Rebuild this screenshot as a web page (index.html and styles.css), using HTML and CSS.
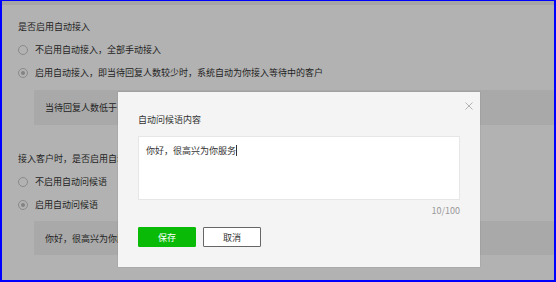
FILE: index.html
```html
<!DOCTYPE html>
<html lang="zh-CN">
<head>
  <meta charset="UTF-8" />
  <title>自动接入设置</title>
  <link rel="stylesheet" href="styles.css">
</head>
<body>

  <div class="frame">

    <div class="page">

      <div class="settings">

        <div class="field-title">是否启用自动接入</div>

        <label class="radio-row">
          <span class="radio"></span>
          <span>不启用自动接入，全部手动接入</span>
        </label>

        <label class="radio-row">
          <span class="radio checked"></span>
          <span>启用自动接入，即当待回复人数较少时，系统自动为你接入等待中的客户</span>
        </label>

        <div class="sub-box">
          <span>当待回复人数低于</span>
          <span class="num-input"></span>
        </div>

        <div class="field-title gap-top">接入客户时，是否启用自动问候语</div>

        <label class="radio-row">
          <span class="radio"></span>
          <span>不启用自动问候语</span>
        </label>

        <label class="radio-row">
          <span class="radio checked"></span>
          <span>启用自动问候语</span>
        </label>

        <div class="sub-box">
          <span>你好，很高兴为你服务</span>
        </div>

      </div>

    </div>

    <div class="mask"></div>

    <!-- 问候语编辑弹窗 -->
    <div class="dialog">
      <span class="close">
        <svg width="8" height="8" viewBox="0 0 8 8">
          <path d="M0.5 0.5 L7.5 7.5 M7.5 0.5 L0.5 7.5" stroke="#b4b4b4" stroke-width="1" fill="none"/>
        </svg>
      </span>
      <div class="dialog-title">自动问候语内容</div>
      <div class="textarea">你好，很高兴为你服务<span class="caret"></span></div>
      <div class="counter">10/100</div>
      <div class="actions">
        <button class="btn btn-primary">保存</button>
        <button class="btn btn-default">取消</button>
      </div>
    </div>

  </div>

</body>
</html>
```

FILE: styles.css
```css
* {
  margin: 0;
  padding: 0;
  box-sizing: border-box;
}

body {
  font-family: "Noto Sans CJK SC", "Noto Sans", sans-serif;
  font-size: 9px;
  color: #333;
  background: #fff;
}

.frame {
  position: relative;
  width: 556px;
  height: 282px;
  border-top: 1px solid #0000ff;
  border-left: 2px solid #0000ff;
  border-right: 2px solid #0000ff;
  border-bottom: 2px solid #0000ff;
  overflow: hidden;
}

.page {
  height: 100%;
  padding-top: 4px;
  background-color: #eeeeee;
}

.settings {
  height: 100%;
  background-color: #fff;
  padding: 14px 0 0 16px;
}

.field-title {
  line-height: 16px;
}

.field-title.gap-top {
  margin-top: 26px;
}

.radio-row {
  display: flex;
  align-items: center;
  gap: 7px;
  line-height: 16px;
  margin-top: 7px;
}

.radio {
  width: 10px;
  height: 10px;
  border: 1px solid #c6c6c6;
  border-radius: 50%;
  background: #fff;
  display: flex;
  align-items: center;
  justify-content: center;
}

.radio.checked::after {
  content: "";
  width: 4px;
  height: 4px;
  border-radius: 50%;
  background-color: #bcbcbc;
}

.sub-box {
  margin: 9px 0 0 16px;
  height: 35px;
  background-color: #f2f2f2;
  padding-left: 11px;
  display: flex;
  align-items: center;
}

.sub-box:last-child {
  margin-top: 8px;
  height: 34px;
}

.num-input {
  display: inline-block;
  width: 40px;
  height: 20px;
  margin-left: 3px;
  background: #fff;
  border: 1px solid #dcdcdc;
}

.mask {
  position: absolute;
  inset: 0;
  background-color: rgba(0, 0, 0, 0.3);
}

.dialog {
  position: absolute;
  left: 116px;
  top: 91px;
  width: 362px;
  height: 175px;
  background-color: #f4f4f4;
  box-shadow: 0 0 1px rgba(0, 0, 0, 0.25);
  padding: 20px 20px 0 20px;
}

.close {
  position: absolute;
  right: 7px;
  top: 10px;
  width: 8px;
  height: 8px;
  display: flex;
}

.dialog-title {
  line-height: 16px;
}

.textarea {
  margin-top: 8px;
  height: 64px;
  background-color: #fff;
  border: 1px solid #e6e6e6;
  padding: 6px 7px;
  line-height: 16px;
}

.caret {
  display: inline-block;
  width: 1px;
  height: 11px;
  background-color: #333;
  vertical-align: -2px;
}

.counter {
  margin-top: 3px;
  line-height: 16px;
  text-align: right;
  color: #999;
}

.actions {
  margin-top: 8px;
  display: flex;
  gap: 7px;
}

.btn {
  width: 58px;
  height: 20px;
  font-family: inherit;
  font-size: 9px;
  border-radius: 1px;
  cursor: pointer;
}

.btn-primary {
  background-color: #09bb07;
  border: 1px solid #09bb07;
  color: #fff;
}

.btn-default {
  background-color: #fff;
  border: 1px solid #666;
  color: #333;
}
```
